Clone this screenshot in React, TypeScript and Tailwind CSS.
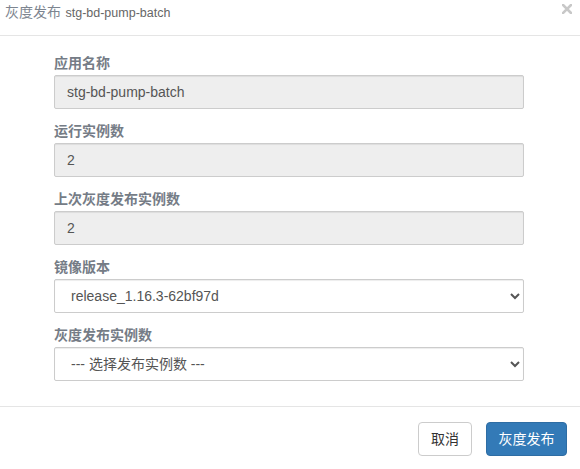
import React from 'react';

const font = { fontFamily: '"Liberation Sans", "Noto Sans CJK SC", sans-serif' };

function Field({ label, children }: { label: string; children: React.ReactNode }) {
  return (
    <div className="mb-3">
      <label className="block h-5 leading-5 mb-[2px] text-[14px] font-bold text-[#757c86]">{label}</label>
      {children}
    </div>
  );
}

function ReadOnly({ value }: { value: string }) {
  return (
    <div className="h-[34px] border border-[#ccc] bg-[#eee] rounded-[2px] px-3 flex items-center text-[14px] text-[#555] shadow-[inset_0_1px_1px_rgba(0,0,0,0.075)]">
      {value}
    </div>
  );
}

function Select({ value }: { value: string }) {
  return (
    <select
      defaultValue={value}
      className="block w-full h-[34px] border border-[#ccc] bg-white rounded-[2px] px-3 text-[14px] text-[#555] shadow-[inset_0_1px_1px_rgba(0,0,0,0.075)]"
    >
      <option value={value}>{value}</option>
    </select>
  );
}

export default function App() {
  return (
    <div className="w-[580px] h-[469px] bg-white overflow-hidden" style={font}>
      <div className="h-9 border-b border-[#e5e5e5] flex items-start justify-between pl-[5px] pr-[8px]">
        <div className="pt-[2px] leading-5">
          <span className="text-[14px] text-[#7d8590]">灰度发布</span>{' '}
          <span className="text-[12.5px] text-[#666]">stg-bd-pump-batch</span>
        </div>
        <button className="mt-[4px] w-[10px] h-[10px]" aria-label="close">
          <svg width="10" height="10" viewBox="0 0 10 10">
            <path d="M1 1L9 9M9 1L1 9" stroke="#c8c8c8" strokeWidth="2.6" strokeLinecap="square" />
          </svg>
        </button>
      </div>

      <div className="pt-[17px] pb-[13px]">
        <div className="ml-[54px] w-[470px]">
          <Field label="应用名称">
            <ReadOnly value="stg-bd-pump-batch" />
          </Field>
          <Field label="运行实例数">
            <ReadOnly value="2" />
          </Field>
          <Field label="上次灰度发布实例数">
            <ReadOnly value="2" />
          </Field>
          <Field label="镜像版本">
            <Select value="release_1.16.3-62bf97d" />
          </Field>
          <Field label="灰度发布实例数">
            <Select value="--- 选择发布实例数 ---" />
          </Field>
        </div>
      </div>

      <div className="border-t border-[#e5e5e5] pt-[15px] pr-[13px] flex justify-end gap-[14px]">
        <button className="h-[34px] w-[54px] border border-[#ccc] rounded-[4px] bg-white text-[14px] text-[#333]">取消</button>
        <button className="h-[34px] w-[81px] border border-[#2e6da4] rounded-[4px] bg-[#337ab7] text-[14px] text-white">灰度发布</button>
      </div>
    </div>
  );
}
